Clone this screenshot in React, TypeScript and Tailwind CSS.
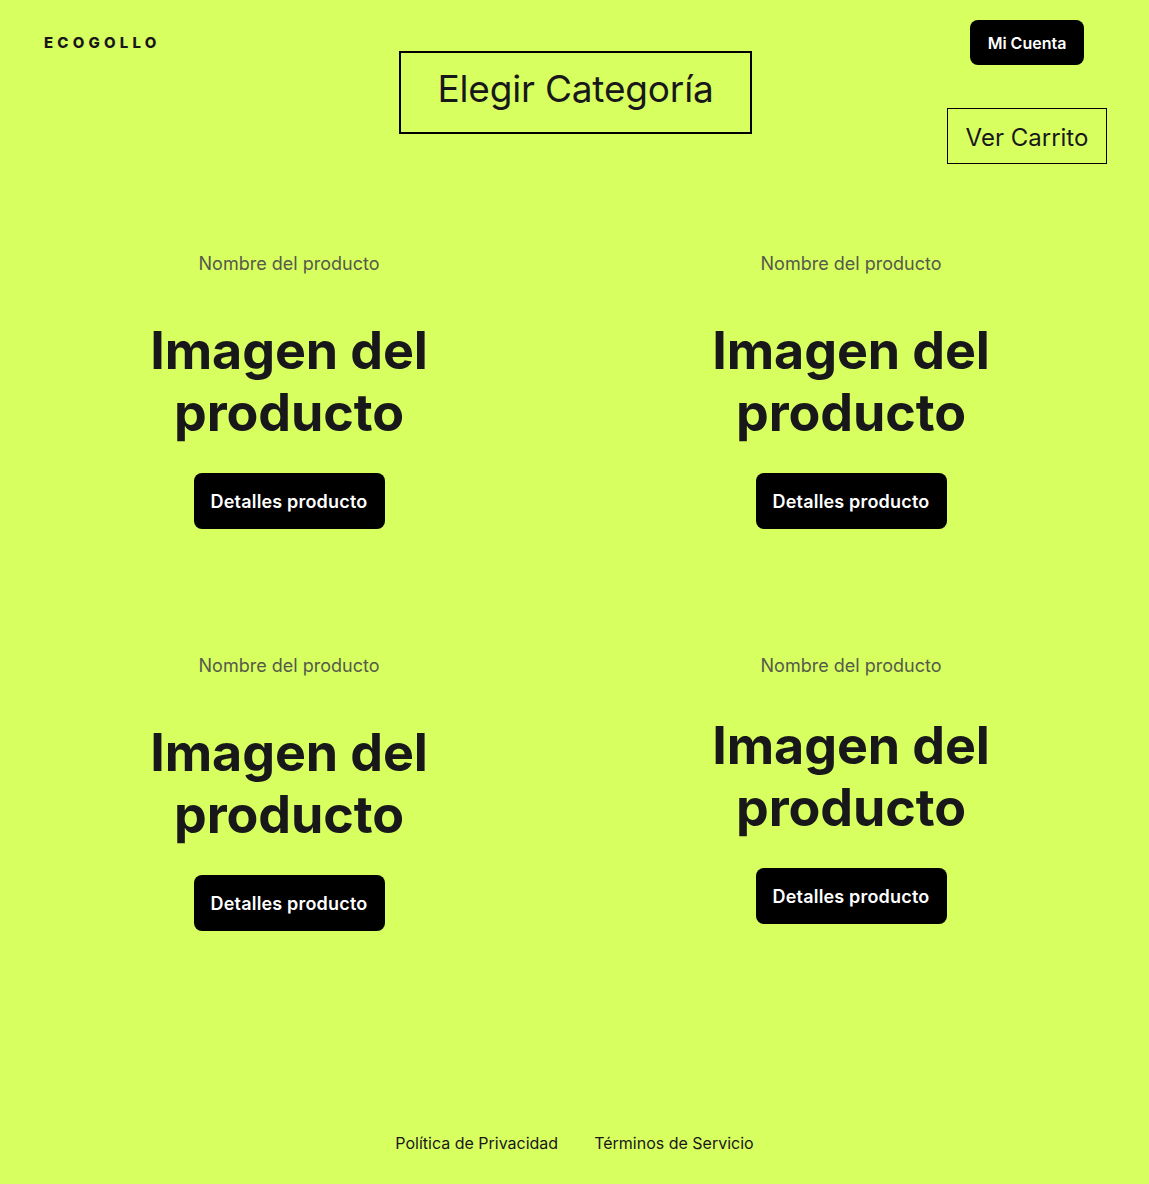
const products = [
  { name: "Nombre del producto", shift: false },
  { name: "Nombre del producto", shift: false },
  { name: "Nombre del producto", shift: false },
  { name: "Nombre del producto", shift: true },
];

function ProductCard({ name, shift }: { name: string; shift: boolean }) {
  return (
    <article className="flex flex-col items-center">
      <p className="text-[18px] leading-6 text-[#555a4a]">{name}</p>
      <h2
        className={`text-center text-[52px] font-bold leading-[62px] tracking-[-0.002em] text-[#18181b] ${
          shift ? "mt-[37px]" : "mt-[44px]"
        }`}
      >
        Imagen del
        <br />
        producto
      </h2>
      <button
        className={`h-14 w-[191px] rounded-lg bg-black text-[18px] font-semibold tracking-[0.01em] text-white ${
          shift ? "mt-[29px] mb-[7px]" : "mt-[29px]"
        }`}
      >
        Detalles producto
      </button>
    </article>
  );
}

export default function App() {
  return (
    <div className="min-h-[1184px] bg-[#d8ff60] font-['Inter',sans-serif] text-[#18181b]">
      <header className="grid grid-cols-3 items-start pl-[44px] pr-[42px] pt-5">
        <p className="mt-[13px] text-[15px] font-extrabold leading-5 tracking-[0.28em]">ECOGOLLO</p>
        <div className="mt-[31px] justify-self-center">
          <button className="flex h-[83px] w-[353px] items-center justify-center border-2 border-black pb-2 text-[37px] tracking-[-0.005em]">
            Elegir Categoría
          </button>
        </div>
        <div className="flex w-[160px] flex-col items-center gap-[43px] justify-self-end">
          <button className="h-[45px] w-[114px] rounded-lg bg-black text-[16px] font-semibold text-white">
            Mi Cuenta
          </button>
          <button className="h-14 w-[160px] border border-black pt-1 text-[24px]">Ver Carrito</button>
        </div>
      </header>

      <main className="ml-2 mt-[88px] grid w-[1124px] grid-cols-2 gap-y-[125px]">
        {products.map((p, i) => (
          <ProductCard key={i} name={p.name} shift={p.shift} />
        ))}
      </main>

      <footer className="mt-[200px] flex justify-center gap-9 pb-[29px] text-[16px] leading-6">
        <a href="#">Política de Privacidad</a>
        <a href="#">Términos de Servicio</a>
      </footer>
    </div>
  );
}
